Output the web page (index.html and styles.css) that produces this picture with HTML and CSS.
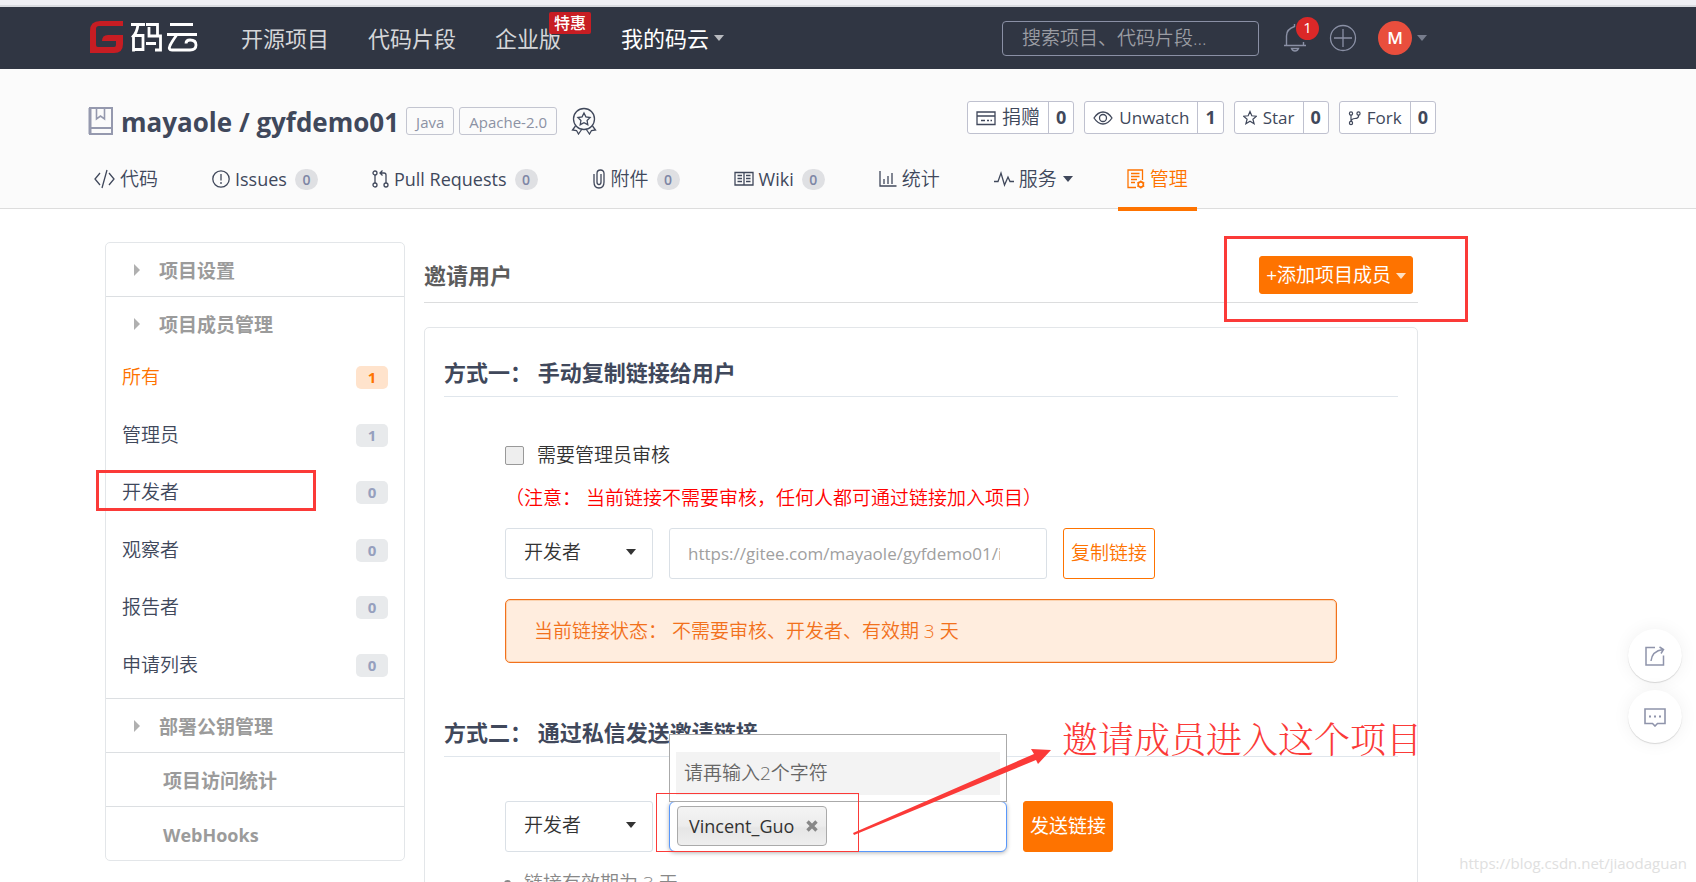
FILE: index.html
```html
<!DOCTYPE html>
<html lang="zh-CN">
<head>
<meta charset="utf-8">
<title>mayaole / gyfdemo01</title>
<link rel="stylesheet" href="styles.css">
</head>
<body>
<div class="page">
  <div class="browser-edge"></div>
  <header class="topbar">
    <a class="logo" href="#" aria-label="码云">
      <svg width="108" height="34" viewBox="0 0 108 34" fill="none">
        <path d="M33 0v5H9Q6 5 6 8v16q0 2 2 2h16q2 0 2-2v-4H12q0-6 6-6h15v9q0 9-9 9H0V10Q0 0 10 0z" fill="#c71d23"/>
        <g stroke="#fff" stroke-width="2.800">
          <path d="M41 3.500h14M48 3.500q-1 9-6 13M43.500 14v16.500M43.500 14.500H53v14h-9.500M56 3.500h11.500v11M59 6v9h11.500v14H65M56 22.500h10"/>
          <path d="M80 3.500h23M77 13.500h30M87 13.500q-5 7-7 11-2 4.500 2 4.500h18q6 0 6-5t-6-5q-4 0-4 3.500"/>
        </g>
      </svg>
    </a>
    <nav class="mainnav">
      <a href="#">开源项目</a>
      <a href="#">代码片段</a>
      <a href="#" class="has-promo">企业版<span class="promo">特惠</span></a>
      <a href="#" class="mine">我的码云<i class="caret"></i></a>
    </nav>
    <div class="topright">
      <input class="search" type="text" aria-label="搜索" placeholder="搜索项目、代码片段...">
      <a class="bell" href="#" aria-label="通知">
        <svg width="24" height="30" viewBox="0 0 24 30" fill="none" stroke="#8a90a5" stroke-width="1.4"><path d="M1 22.500h22M3.500 22V13q0-7 8-9.500V1M20.500 19v3M8.500 25.500h7q-1 2.500-3.500 2.500t-3.500-2.500z"/></svg>
        <span class="count">1</span>
      </a>
      <a class="plus" href="#" aria-label="新建"><svg width="28" height="28" viewBox="0 0 28 28" fill="none" stroke="#8a90a5" stroke-width="1.300"><circle cx="14" cy="14" r="12.500"/><path d="M5 14h18M14 5v18"/></svg></a>
      <a class="avatar-link" href="#"><span class="avatar">M</span><i class="caret dim"></i></a>
    </div>
  </header>

  <section class="project">
    <div class="project-head">
      <svg class="book" width="26" height="28" viewBox="0 0 26 28" fill="none" stroke="#9599ae" stroke-width="2"><path d="M2 1h22v26H2zM2 21h22" /><path d="M8.500 1v11l4-3 4 3V1" stroke-width="1.600"/><path d="M2 1v26" stroke-width="3"/></svg>
      <h1><a href="#">mayaole</a> / <a href="#">gyfdemo01</a></h1>
      <span class="label">Java</span>
      <span class="label">Apache-2.0</span>
      <svg class="award" width="26" height="28" viewBox="0 0 26 28" fill="none" stroke="#40485b" stroke-width="1.300"><circle cx="13" cy="12" r="10.500"/><path d="M13 6l1.900 3.900 4.200.6-3 3 .7 4.200-3.800-2-3.800 2 .7-4.200-3-3 4.200-.6zM4.500 19L1.500 23l4 .5L7.500 27l3.500-5M21.500 19l3 4-4 .5-2 3.500-3.500-5"/></svg>
      <div class="actions">
        <div class="action"><button class="cjk" type="button"><svg width="20" height="16" viewBox="0 0 20 16" fill="none" stroke="#40485b" stroke-width="1.300"><path d="M1 2h18v12.500H1zM1 6h18M5 10.500h4M11 10.500h2M14.500 10.500h1.500"/></svg>捐赠</button><a href="#">0</a></div>
        <div class="action"><button type="button"><svg width="20" height="16" viewBox="0 0 20 16" fill="none" stroke="#40485b" stroke-width="1.300"><path d="M1 8q4-6 9-6t9 6q-4 6-9 6T1 8z"/><circle cx="10" cy="8" r="3.500"/></svg>Unwatch</button><a href="#">1</a></div>
        <div class="action"><button type="button"><svg width="14" height="16" viewBox="1 0 14 16" fill="none" stroke="#40485b" stroke-width="1.200"><path d="M8 1.500l1.800 4.300 4.700.4-3.600 3 1.200 4.600L8 11.300l-4.100 2.500 1.200-4.600-3.600-3 4.700-.4z"/></svg>Star</button><a href="#">0</a></div>
        <div class="action"><button type="button"><svg width="13" height="16" viewBox="1 0 13 16" fill="none" stroke="#40485b" stroke-width="1.200"><circle cx="4" cy="3.500" r="1.600"/><circle cx="11.500" cy="3.500" r="1.600"/><circle cx="4" cy="13" r="1.600"/><path d="M4 5v6.400M11.500 5v1.500Q11 8.500 8 8.500T4 11"/></svg>Fork</button><a href="#">0</a></div>
      </div>
    </div>
    <nav class="tabs">
      <a class="cjk" href="#"><svg width="21" height="20" viewBox="0 0 21 20" fill="none" stroke="#40485b" stroke-width="1.300"><path d="M6 4L1 10l5 6M15 4l5 6-5 6M13 1L8 19"/></svg>代码</a>
      <a href="#"><svg width="18" height="20" viewBox="0 0 18 20" fill="none" stroke="#40485b" stroke-width="1.300"><circle cx="9" cy="10" r="8.200"/><path d="M9 5v6.500M9 13v2"/></svg>Issues<b>0</b></a>
      <a href="#"><svg width="17" height="20" viewBox="0 0 17 20" fill="none" stroke="#40485b" stroke-width="1.300"><circle cx="3" cy="4" r="2"/><circle cx="3" cy="16" r="2"/><circle cx="14" cy="16" r="2"/><path d="M3 6v8M14 14V6q0-2-2-2H8M10.500 1.500L8 4l2.500 2.500"/></svg>Pull Requests<b>0</b></a>
      <a class="cjk" href="#"><svg width="14" height="20" viewBox="0 0 14 20" fill="none" stroke="#40485b" stroke-width="1.300"><path d="M2 5v8q0 6 5 6t5-6V4.500Q12 1 8.500 1T5 4.500V13q0 2.500 2 2.500T9 13V5"/></svg>附件<b>0</b></a>
      <a href="#"><svg width="20" height="20" viewBox="0 0 20 20" fill="none" stroke="#40485b" stroke-width="1.300"><path d="M1 3.500h18v12.500H1zM10 3.500V16M3.500 6.500H8M3.500 9.500H8M3.500 12.500H8M12 6.500h4.500M12 9.500h4.500M12 12.500h4.500"/></svg>Wiki<b>0</b></a>
      <a class="cjk" href="#"><svg width="18" height="20" viewBox="0 0 18 20" fill="none" stroke="#40485b" stroke-width="1.300"><path d="M1 2v15h16.500M5 15v-5M9 15V7M13 15V4"/></svg>统计</a>
      <a class="cjk" href="#"><svg width="20" height="20" viewBox="0 0 20 20" fill="none" stroke="#40485b" stroke-width="1.300"><path d="M0 12.500h4L7 4l3.500 12L14 8l2 4.500h4"/></svg>服务<i class="caret dark"></i></a>
      <a href="#" class="cjk active"><svg width="18" height="20" viewBox="0 0 18 20" fill="none" stroke="#fe7300" stroke-width="1.300"><path d="M9 18.500H1V1h14.500v10M4 4.500h8.500M4 7.500h8.500M4 10.500h6M4 13.500h4"/><circle cx="13.800" cy="15.500" r="2.600" stroke-width="1.600"/><path d="M13.800 11.500v1.400M13.800 18v1.400M10.300 13.500l1.200.7M16.100 16.800l1.200.7M10.300 17.500l1.200-.7M16.100 14.200l1.200-.7"/></svg>管理</a>
    </nav>
  </section>

  <div class="body">
    <aside class="sidebar">
      <h3 class="arrow top"><a href="#">项目设置</a></h3>
      <h3 class="arrow top"><a href="#">项目成员管理</a></h3>
      <ul>
        <li class="current"><a href="#">所有</a><span>1</span></li>
        <li><a href="#">管理员</a><span>1</span></li>
        <li class="marked"><a href="#">开发者</a><span>0</span></li>
        <li><a href="#">观察者</a><span>0</span></li>
        <li><a href="#">报告者</a><span>0</span></li>
        <li><a href="#">申请列表</a><span>0</span></li>
      </ul>
      <h3 class="arrow"><a href="#">部署公钥管理</a></h3>
      <h3><a href="#">项目访问统计</a></h3>
      <h3><a class="latin" href="#">WebHooks</a></h3>
    </aside>

    <main class="main">
      <div class="main-head">
        <h2>邀请用户</h2>
        <div class="add-wrap"><button class="btn solid add" type="button">+添加项目成员<i class="caret light"></i></button></div>
      </div>
      <div class="panel">
        <h3>方式一： 手动复制链接给用户</h3>
        <div class="form">
          <label class="check"><input type="checkbox">需要管理员审核</label>
          <p class="warn">（注意： 当前链接不需要审核，任何人都可通过链接加入项目）</p>
          <div class="row">
            <span class="select"><select aria-label="成员角色"><option>开发者</option></select></span>
            <input class="link" type="text" aria-label="邀请链接" readonly value="https://gitee.com/mayaole/gyfdemo01/invite_link">
            <button class="btn outline" type="button">复制链接</button>
          </div>
          <div class="alert">当前链接状态： 不需要审核、开发者、有效期 3 天</div>
        </div>
        <h3 class="second">方式二： 通过私信发送邀请链接</h3>
        <div class="form second">
          <div class="row">
            <span class="select"><select aria-label="受邀角色"><option>开发者</option></select></span>
            <div class="tokens">
              <span class="token">Vincent_Guo<button type="button" aria-label="移除"><svg width="12" height="12" viewBox="0 0 12 12" stroke="#888" stroke-width="3.400"><path d="M1.500 1.500l9 9M10.500 1.500l-9 9"/></svg></button></span>
              <div class="drop"><div>请再输入2个字符</div></div>
              <svg class="pointer" width="200" height="90" viewBox="0 0 200 90"><path d="M0 84L181 5l-3-5 20 1-13 14-2-4L1 86z" fill="#fb3a38"/></svg>
              <span class="callout">邀请成员进入这个项目</span>
            </div>
            <button class="btn solid" type="button">发送链接</button>
          </div>
          <ul class="hints"><li>链接有效期为 3 天</li></ul>
        </div>
      </div>
    </main>
  </div>

  <div class="floaters">
    <button type="button" aria-label="分享"><svg width="20" height="20" viewBox="0 0 20 20" fill="none" stroke="#8f94ab" stroke-width="1.500"><path d="M10 1.500H1v17.500h17.500V9.500M6 15Q7 5 18 3.500M14.500 1l4 2.500-2.500 4"/></svg></button>
    <button type="button" aria-label="反馈"><svg width="22" height="20" viewBox="0 0 22 20" fill="none" stroke="#8f94ab" stroke-width="1.600"><path d="M1 2h20v14.500h-7.500L11 19l-2.500-2.500H1z"/><path d="M5 9.500h2M10 9.500h2M15 9.500h2" stroke-width="2.200"/></svg></button>
  </div>
  <div class="watermark">https://blog.csdn.net/jiaodaguan</div>
</div>
</body>
</html>
```
FILE: styles.css
```css
*, *::before, *::after { box-sizing: border-box; }
body { margin: 0; font: 19px/27px "Open Sans", "Noto Sans CJK SC", sans-serif; color: #40485b; background: #fff; }
a { color: inherit; text-decoration: none; }
h1, h2, h3, p, ul { margin: 0; padding: 0; }
ul { list-style: none; }
button, input, select { font: inherit; color: inherit; }
svg { display: block; flex: none; }

.page { position: relative; height: 100vh; overflow: hidden; }
.browser-edge { height: 7px; background: #efeff4; border-bottom: 2px solid #d9dbe0; }

.caret { display: inline-block; border: 5px solid transparent; border-top: 6px solid #b8babf; border-bottom: 0; }
.caret.dim { border-top-color: #777d8d; }
.caret.dark { border-top-color: #40485b; margin-left: 6px; }
.caret.light { border-top-color: #ffe0c4; margin-left: 5px; vertical-align: 3px; }

.topbar { display: flex; align-items: center; height: 62px; padding: 0 269px 0 90px; background: #303643; color: #fff; }
.mainnav { display: flex; gap: 39px; margin-left: 43px; font-size: 22px; color: #d5d6d9; }
.mainnav a { position: relative; white-space: nowrap; }
.mainnav .mine { margin-left: 21px; color: #fff; display: flex; align-items: center; gap: 5px; }
.promo { position: absolute; left: 54px; top: -13px; padding: 0 5px; border-radius: 2px; background: #c71d23; color: #fff; font-size: 16px; line-height: 22px; font-weight: 500; }
.topright { display: flex; align-items: center; margin-left: auto; }
.search { width: 257px; height: 35px; padding: 0 19px; border: 1px solid #8a90a5; border-radius: 4px; background: transparent; color: #fff; font-weight: 350; }
.search::placeholder { color: #9b9da3; }
.bell { position: relative; margin-left: 24px; }
.count { position: absolute; left: 13px; top: -6px; width: 23px; height: 23px; border-radius: 50%; background: #db2828; color: #fff; font-size: 15px; line-height: 21px; text-align: center; }
.plus { margin-left: 22px; }
.avatar-link { display: flex; align-items: center; gap: 5px; margin-left: 21px; }
.avatar { width: 34px; height: 34px; border-radius: 50%; background: #e94e3d; font-size: 17px; font-weight: 600; line-height: 34px; text-align: center; }

.project { padding: 32px 260px 0 88px; background: #fbfbfb; border-bottom: 1px solid #ddd; }
.project-head { display: flex; align-items: flex-start; }
.project-head h1 { margin: 3px 7px 0 7px; font-size: 26px; line-height: 36px; font-weight: 700; white-space: nowrap; }
.book, .award { margin-top: 6px; }
.label { height: 28px; margin: 6px 5px 0 0; padding: 0 9px; border: 1px solid #c3c5d0; border-radius: 3px; color: #8c92a4; font-size: 15px; line-height: 29px; }
.award { margin-left: 9px; }
.actions { display: flex; gap: 10px; margin-left: auto; }
.action { display: flex; height: 33px; border: 1px solid #bfc1cf; border-radius: 3px; background: #fff; }
.action button { display: flex; align-items: center; gap: 6px; padding: 0 8px; border: 0; background: none; font-size: 17px; }
.action a { padding: 0 7px; border-left: 1px solid #bfc1cf; font-size: 18px; font-weight: 700; line-height: 31px; }
.tabs { display: flex; gap: 36px; margin: 15px 0 -3px -3px; }
.tabs a { display: flex; align-items: center; height: 56px; padding: 0 9px 8px; font-size: 18px; white-space: nowrap; }
.action .cjk, .tabs .cjk { font-size: 19px; font-weight: 350; }
.tabs svg { margin-right: 5px; }
.tabs b { min-width: 23px; height: 21px; margin-left: 8px; border-radius: 11px; background: #dfe0e3; color: #7d86a5; font-size: 14px; line-height: 21px; font-weight: 600; text-align: center; }
.tabs .active { padding-bottom: 4px; border-bottom: 4px solid #fe7300; color: #fe7300; }

.body { display: flex; align-items: flex-start; gap: 19px; padding: 33px 278px 0 105px; }
.sidebar { flex: 0 0 300px; border: 1px solid #e3e6e9; border-radius: 5px; }
.sidebar h3 { position: relative; height: 54px; padding-left: 57px; border-top: 1px solid #dcdfe2; font-size: 19px; font-weight: 700; line-height: 56px; color: #9b9b9b; }
.sidebar h3.top { height: 53px; }
.sidebar h3:first-child { border-top: 0; }
.sidebar h3.arrow { padding-left: 53px; }
.sidebar .latin { font-size: 18px; }
.arrow::before { content: ""; position: absolute; left: 28px; top: 21px; border: 6px solid transparent; border-left: 6px solid #b0b0b0; border-right: 0; }
.sidebar ul { padding-bottom: 4px; font-weight: 350; }
.sidebar li { position: relative; display: flex; align-items: center; justify-content: space-between; height: 57px; padding: 0 16px; }
.sidebar li:nth-child(even) { height: 58px; }
.sidebar li span { width: 32px; height: 23px; border-radius: 5px; background: #e8eaec; color: #96a0be; font-size: 15px; font-weight: 700; line-height: 23px; text-align: center; }
.sidebar .current { color: #fe7300; }
.sidebar .current span { background: #ffe3cc; color: #fe7300; }
.marked::after { content: ""; position: absolute; left: -10px; top: 6px; width: 220px; height: 41px; border: 3px solid #fb3a38; }

.main { flex: 1; min-width: 0; }
.main-head { display: flex; align-items: flex-start; justify-content: space-between; height: 61px; padding: 14px 5px 0 0; border-bottom: 1px solid #dcddde; }
.main-head h2 { font-size: 22px; line-height: 38px; font-weight: 700; color: #5c5c5c; }
.add-wrap { position: relative; }
.add-wrap::after { content: ""; position: absolute; inset: -20px -55px -28px -35px; border: 3px solid #fb3a38; pointer-events: none; }
.btn { border: 1px solid #fe7300; border-radius: 3px; padding: 0 7px; white-space: nowrap; }
.solid { background: #fe7300; color: #fff; font-weight: 400; }
.outline { background: #fff; color: #fe7300; font-weight: 350; }
.add { display: block; height: 38px; padding: 0 6px; }
.panel { margin-top: 24px; padding: 28px 19px 60px; border: 1px solid #e3e6e9; border-radius: 5px; }
.panel h3 { padding-bottom: 7px; border-bottom: 1px solid #e0e6ec; font-size: 22px; line-height: 33px; font-weight: 700; }
.panel h3.second { margin-top: 53px; }
.form { padding: 45px 61px 0; font-weight: 350; }
.form.second { padding-top: 44px; }
.check { display: flex; align-items: center; gap: 13px; color: #333; }
.check input { appearance: none; width: 19px; height: 19px; margin: 0; border: 1px solid #999; border-radius: 2px; background: #eee; }
.warn { margin-top: 16px; color: #f00; white-space: nowrap; }
.row { display: flex; gap: 16px; margin-top: 16px; }
.second .row { margin-top: 0; }
.select { position: relative; flex: 0 0 148px; height: 51px; }
.select::after { content: ""; position: absolute; right: 17px; top: 21px; border: 5px solid transparent; border-top: 6px solid #333; border-bottom: 0; pointer-events: none; }
.select select { appearance: none; width: 100%; height: 100%; padding: 0 19px 2px 18px; border: 1px solid #dae0e6; border-radius: 3px; background: #fff; color: #333; }
.link { width: 378px; height: 51px; padding: 0 46px 0 18px; border: 1px solid #dae0e6; border-radius: 3px; color: #a0a0a0; font-size: 17px; font-weight: 400; }
.alert { margin-top: 20px; padding: 17px 28px; border: 1px solid #f2711c; border-radius: 5px; background: #ffedde; box-shadow: inset 0 0 0 1px #fbd3b0; color: #f2711c; line-height: 28px; }
.tokens { position: relative; width: 338px; height: 51px; padding: 4px 7px; border: 1px solid #5897fb; border-radius: 6px; box-shadow: 0 1px 4px rgba(0,0,0,.3); background: #fff; }
.tokens::after { content: ""; position: absolute; left: -14px; top: -9px; width: 203px; height: 59px; border: 1px solid #fb3a38; z-index: 2; }
.token { display: inline-flex; align-items: center; gap: 12px; height: 40px; padding: 0 8px 0 11px; border: 1px solid #aaa; border-radius: 4px; background: linear-gradient(#f4f4f4, #ececec 50%, #e6e6e6 55%, #eee); color: #333; font-size: 18px; font-weight: 400; }
.token button { padding: 0; border: 0; background: none; }
.drop { position: absolute; left: -1px; right: -1px; bottom: 49px; padding: 17px 6px 6px; border: 1px solid #aaa; background: #fff; }
.drop div { padding: 8px 8px; background: #f3f3f3; color: #666; }
.pointer { position: absolute; left: 183px; top: -53px; z-index: 3; }
.callout { position: absolute; left: 392px; top: -83px; font: 36px/44px "Liberation Serif", "Noto Serif CJK SC", "Noto Sans CJK SC", serif; font-weight: 300; color: #fb3a38; white-space: nowrap; }
.second .btn { padding: 0 6px; }
.hints { margin: 18px 0 0 19px; color: #888; list-style: disc; }

.floaters { position: absolute; right: 14px; top: 629px; display: grid; gap: 8px; }
.floaters button { display: grid; place-items: center; width: 54px; height: 53px; padding: 0; border: 0; border-radius: 50%; background: #fff; box-shadow: 0 1px 1px rgba(0,0,0,.14), 0 0 18px rgba(0,0,0,.06); }
.watermark { position: absolute; right: 9px; bottom: 7px; font-size: 15px; line-height: 24px; color: #e0e0e0; }
```
